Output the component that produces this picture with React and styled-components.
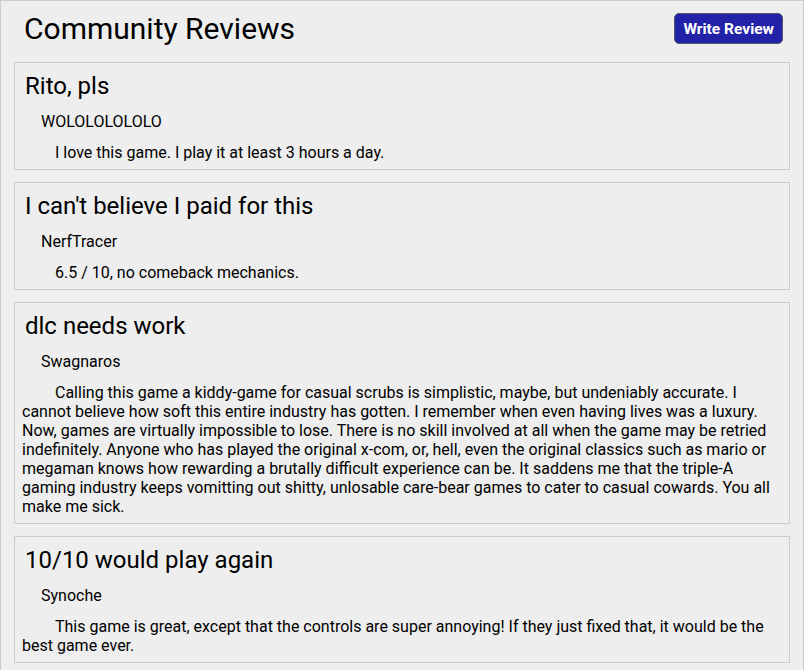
import React from "react";
import styled, { createGlobalStyle } from "styled-components";

const GlobalStyle = createGlobalStyle`
  body {
    margin: 0;
    background: #eeeeee;
    font-family: Roboto, "Liberation Sans", sans-serif;
    color: #000;
  }
`;

const Page = styled.div`
  border: 1px solid #cccccc;
  background: #eeeeee;
  padding: 0 13px 12px 13px;
`;

const Header = styled.div`
  display: flex;
  justify-content: space-between;
  align-items: center;
  height: 55px;
  padding: 0 7px 0 10px;
  margin-bottom: 6px;
`;

const Title = styled.h1`
  margin: 0;
  font-size: 30px;
  font-weight: 400;
`;

const WriteButton = styled.button`
  height: 31px;
  padding: 0 8px;
  font-family: Roboto, "Liberation Sans", sans-serif;
  font-size: 15.5px;
  font-weight: 700;
  color: #ffffff;
  background: #2222a8;
  border: 1px solid #555566;
  border-radius: 5px;
  cursor: pointer;
`;

const List = styled.div`
  display: flex;
  flex-direction: column;
  gap: 12px;
`;

const Card = styled.div`
  border: 1px solid #cccccc;
  padding: 9px 7px 7px 7px;
`;

const CardTitle = styled.h2`
  margin: 0;
  padding-left: 3px;
  font-size: 24px;
  line-height: 28px;
  font-weight: 400;
`;

const Author = styled.div`
  margin-top: 12px;
  padding-left: 19px;
  font-size: 16px;
  line-height: 19px;
`;

const Body = styled.p`
  margin: 12px 0 0 0;
  font-size: 16px;
  line-height: 19px;
  text-indent: 33px;
`;

const reviews = [
  {
    title: "Rito, pls",
    author: "WOLOLOLOLOLO",
    text: "I love this game. I play it at least 3 hours a day.",
  },
  {
    title: "I can't believe I paid for this",
    author: "NerfTracer",
    text: "6.5 / 10, no comeback mechanics.",
  },
  {
    title: "dlc needs work",
    author: "Swagnaros",
    text:
      "Calling this game a kiddy-game for casual scrubs is simplistic, maybe, but undeniably accurate. I cannot believe how soft this entire industry has gotten. I remember when even having lives was a luxury. Now, games are virtually impossible to lose. There is no skill involved at all when the game may be retried indefinitely. Anyone who has played the original x-com, or, hell, even the original classics such as mario or megaman knows how rewarding a brutally difficult experience can be. It saddens me that the triple-A gaming industry keeps vomitting out shitty, unlosable care-bear games to cater to casual cowards. You all make me sick.",
  },
  {
    title: "10/10 would play again",
    author: "Synoche",
    text:
      "This game is great, except that the controls are super annoying! If they just fixed that, it would be the best game ever.",
  },
];

const App = () => {
  return (
    <>
      <GlobalStyle />
      <Page>
        <Header>
          <Title>Community Reviews</Title>
          <WriteButton>Write Review</WriteButton>
        </Header>
        <List>
          {reviews.map((r) => (
            <Card key={r.title}>
              <CardTitle>{r.title}</CardTitle>
              <Author>{r.author}</Author>
              <Body>{r.text}</Body>
            </Card>
          ))}
        </List>
      </Page>
    </>
  );
};

export default App;
